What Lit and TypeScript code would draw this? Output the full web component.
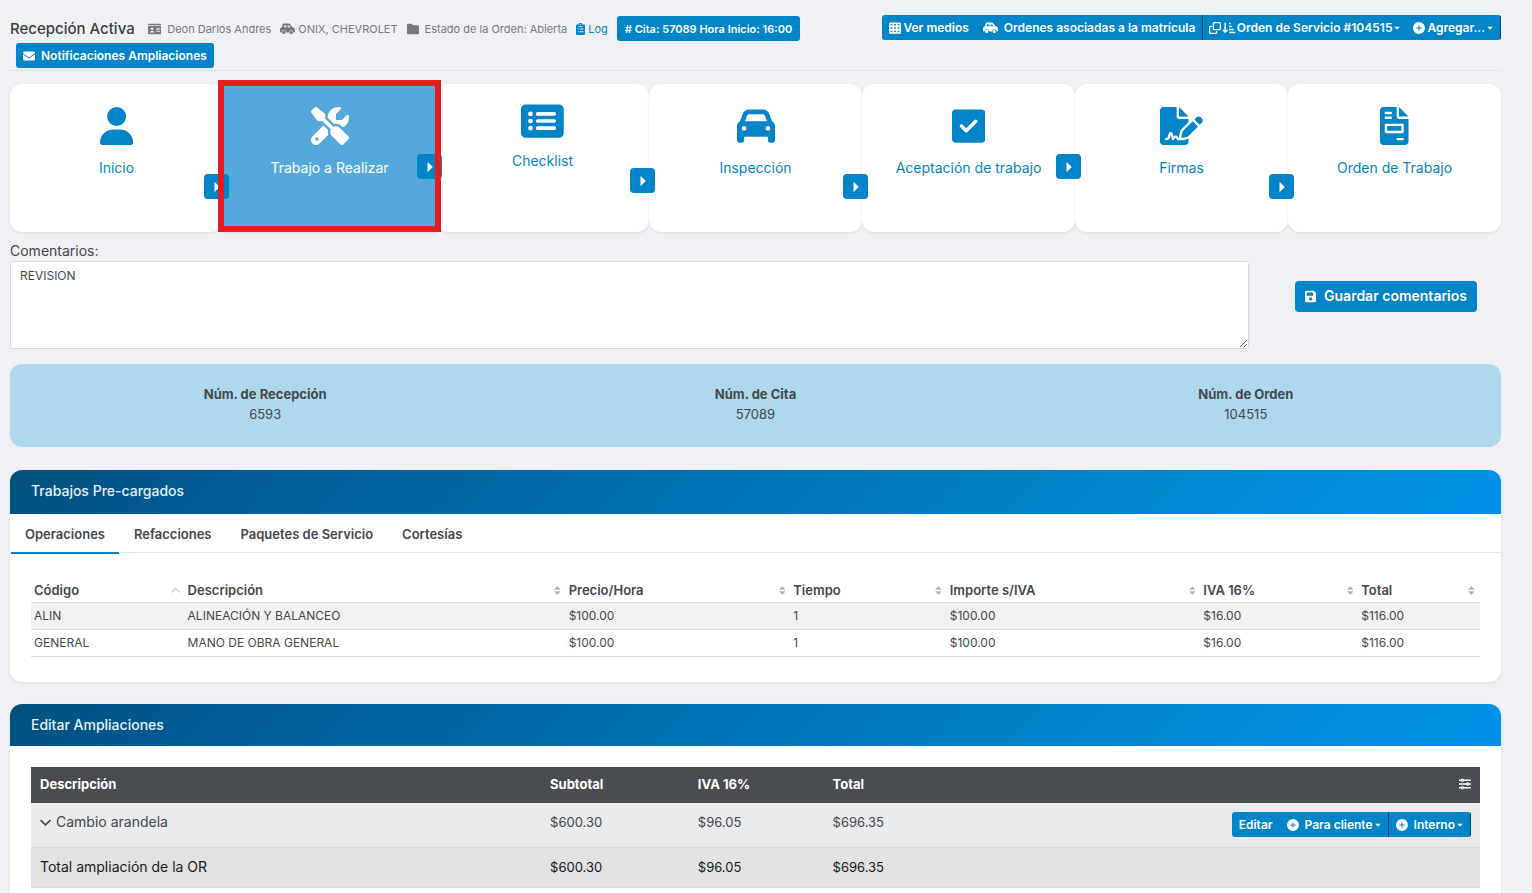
import { LitElement, html, css, svg, nothing } from "lit";
import { customElement, property, state } from "lit/decorators.js";
import { classMap } from "lit/directives/class-map.js";

/* Icon set: viewBox width (height is always 512) and shape data. */
const ICONS: Record<string, { w: number; d: string }> = {
  user: {
    w: 448,
    d: "M224 256A128 128 0 1 0 224 0a128 128 0 1 0 0 256zm-45.7 48C79.8 304 0 383.8 0 482.3C0 498.7 13.3 512 29.7 512H418.3c16.4 0 29.7-13.3 29.7-29.7C448 383.8 368.2 304 269.7 304H178.3z",
  },
  tools: {
    w: 512,
    d: "M78.6 5C69.1-2.4 55.6-1.5 47 7L7 47c-8.5 8.5-9.4 22-2.1 31.6l80 104c4.5 5.9 11.6 9.4 19 9.4h54.1l109 109c-14.7 29-10 65.4 14.3 89.6l112 112c12.5 12.5 32.8 12.5 45.3 0l64-64c12.5-12.5 12.5-32.8 0-45.3l-112-112c-24.2-24.2-60.6-29-89.6-14.3l-109-109V104c0-7.5-3.5-14.5-9.4-19L78.6 5zM19.9 396.1C7.2 408.8 0 426.1 0 444.1C0 481.6 30.4 512 67.9 512c18 0 35.3-7.2 48-19.9L233.7 374.3c-7.8-20.9-9-43.6-3.6-65.1l-61.7-61.7L19.9 396.1zM512 144c0-10.5-1.1-20.7-3.2-30.5c-2.4-11.2-16.1-14.1-24.2-6l-63.9 63.9c-3 3-7.1 4.7-11.3 4.7H352c-8.8 0-16-7.2-16-16V102.6c0-4.2 1.7-8.3 4.7-11.3l63.9-63.9c8.1-8.1 5.2-21.8-6-24.2C388.7 1.1 378.5 0 368 0C288.5 0 224 64.5 224 144l0 .8 85.3 85.3c36-9.1 75.8 .5 104 28.7L429 274.5c49-23 83-72.8 83-130.5zM56 432a24 24 0 1 1 48 0 24 24 0 1 1 -48 0z",
  },
  list: {
    w: 576,
    d: "M0 96C0 60.7 28.7 32 64 32H512c35.3 0 64 28.7 64 64V416c0 35.3-28.7 64-64 64H64c-35.3 0-64-28.7-64-64V96zM128 288a32 32 0 1 0 0-64 32 32 0 1 0 0 64zm32-128a32 32 0 1 0 -64 0 32 32 0 1 0 64 0zM128 384a32 32 0 1 0 0-64 32 32 0 1 0 0 64zm96-248c-13.3 0-24 10.7-24 24s10.7 24 24 24H448c13.3 0 24-10.7 24-24s-10.7-24-24-24H224zm0 96c-13.3 0-24 10.7-24 24s10.7 24 24 24H448c13.3 0 24-10.7 24-24s-10.7-24-24-24H224zm0 96c-13.3 0-24 10.7-24 24s10.7 24 24 24H448c13.3 0 24-10.7 24-24s-10.7-24-24-24H224z",
  },
  car: {
    w: 512,
    d: "M135.2 117.4L109.1 192H402.9l-26.1-74.6C372.3 104.6 360.2 96 346.6 96H165.4c-13.6 0-25.7 8.6-30.2 21.4zM39.6 196.8L74.8 96.3C88.3 57.8 124.6 32 165.4 32H346.6c40.8 0 77.1 25.8 90.6 64.3l35.2 100.5c23.2 9.6 39.6 32.5 39.6 59.2V400v48c0 17.7-14.3 32-32 32H448c-17.7 0-32-14.3-32-32V400H96v48c0 17.7-14.3 32-32 32H32c-17.7 0-32-14.3-32-32V400 256c0-26.7 16.4-49.6 39.6-59.2zM128 288a32 32 0 1 0 -64 0 32 32 0 1 0 64 0zm288 32a32 32 0 1 0 0-64 32 32 0 1 0 0 64z",
  },
  check: {
    w: 448,
    d: "M48 32C21.5 32 0 53.5 0 80V432c0 26.5 21.5 48 48 48H400c26.5 0 48-21.5 48-48V80c0-26.5-21.5-48-48-48H48zM337 209L209 337c-9.4 9.4-24.6 9.4-33.9 0l-64-64c-9.4-9.4-9.4-24.6 0-33.9s24.6-9.4 33.9 0l47 47L303 175c9.4-9.4 24.6-9.4 33.9 0s9.4 24.6 0 33.9z",
  },
  signature: {
    w: 576,
    d: "M48 0C21.5 0 0 21.5 0 48V464c0 26.5 21.5 48 48 48H336c26.5 0 48-21.5 48-48V428.7c-2.7 1.1-5.4 2-8.2 2.7l-60.1 15c-3 .7-6 1.2-9 1.4c-.9 .1-1.8 .2-2.7 .2H240c-6.1 0-11.6-3.4-14.3-8.8l-8.8-17.7c-1.7-3.4-5.1-5.5-8.8-5.5s-7.2 2.1-8.8 5.5l-8.8 17.7c-2.9 5.9-9.2 9.4-15.7 8.8s-12.1-5.1-13.9-11.3L144 381l-9.8 32.8c-6.1 20.3-24.8 34.2-46 34.2H80c-8.8 0-16-7.2-16-16s7.2-16 16-16h8.2c7.1 0 13.3-4.6 15.3-11.4l14.9-49.5c3.4-11.3 13.8-19.1 25.6-19.1s22.2 7.7 25.6 19.1l11.6 38.6c7.4-6.2 16.8-9.7 26.8-9.7c15.9 0 30.4 9 37.5 23.2l4.4 8.8h8.9c-3.1-8.8-3.7-18.4-1.4-27.8l15-60.1c2.8-11.3 8.6-21.5 16.8-29.7L384 203.6V160H256c-17.7 0-32-14.3-32-32V0H48zM256 0V128H384L256 0zM549.8 139.7c-15.6-15.6-40.9-15.6-56.6 0l-29.4 29.4 71 71 29.4-29.4c15.6-15.6 15.6-40.9 0-56.6l-14.4-14.4zM311.9 321c-4.1 4.1-7 9.2-8.4 14.9l-15 60.1c-1.4 5.5 .2 11.2 4.2 15.2s9.7 5.6 15.2 4.2l60.1-15c5.6-1.4 10.8-4.3 14.9-8.4L512.1 262.7l-71-71L311.9 321z",
  },
  invoice: {
    w: 384,
    d: "M256 0v128h128L256 0zM288 256H96v64h192V256zM224 128L224 0H48C21.49 0 0 21.49 0 48v416C0 490.5 21.49 512 48 512h288c26.51 0 48-21.49 48-48V160h-127.1C238.3 160 224 145.7 224 128zM64 72C64 67.63 67.63 64 72 64h80C156.4 64 160 67.63 160 72v16C160 92.38 156.4 96 152 96h-80C67.63 96 64 92.38 64 88V72zM64 136C64 131.6 67.63 128 72 128h80C156.4 128 160 131.6 160 136v16C160 156.4 156.4 160 152 160h-80C67.63 160 64 156.4 64 152V136zM320 440c0 4.375-3.625 8-8 8h-80C227.6 448 224 444.4 224 440v-16c0-4.375 3.625-8 8-8h80c4.375 0 8 3.625 8 8V440zM320 240v96c0 8.875-7.125 16-16 16h-224C71.13 352 64 344.9 64 336v-96C64 231.1 71.13 224 80 224h224C312.9 224 320 231.1 320 240z",
  },
  idCard: {
    w: 576,
    d: "M0 96V80Q0 32 48 32H528Q576 32 576 80V96ZM0 128H576V432Q576 480 528 480H48Q0 480 0 432ZM176 192a56 56 0 1 0 0 112a56 56 0 1 0 0-112ZM80 400H272Q272 336 208 336H144Q80 336 80 400ZM352 208V240H512V208ZM352 272V304H512V272ZM352 336V368H512V336Z",
  },
  carSide: {
    w: 640,
    d: "M178 104H280V176H146ZM328 104V176H462L400 114Q392 104 382 104ZM88 178Q28 186 10 236Q0 262 0 300V368Q0 400 32 400H64A96 96 0 0 1 256 400H384A96 96 0 0 1 576 400H608Q640 400 640 368V300Q640 190 534 180L446 70Q420 24 368 24H171Q120 24 106 80ZM160 328a72 72 0 1 0 0 144a72 72 0 1 0 0-144ZM480 328a72 72 0 1 0 0 144a72 72 0 1 0 0-144Z",
  },
  folder: {
    w: 512,
    d: "M48 32H176Q196 32 210 46L256 96H464Q512 96 512 144V432Q512 480 464 480H48Q0 480 0 432V80Q0 32 48 32Z",
  },
  clipboard: {
    w: 384,
    d: "M48 64H112A80 72 0 0 1 272 64H336Q384 64 384 112V464Q384 512 336 512H48Q0 512 0 464V112Q0 64 48 64ZM192 40a24 24 0 1 0 0 48a24 24 0 1 0 0-48ZM96 128V160H288V128ZM80 232V272H120V232ZM160 232V272H320V232ZM80 352V392H120V352ZM160 352V392H320V352Z",
  },
  envelope: {
    w: 512,
    d: "M48 64H464Q512 64 512 112Q512 136 492 150L275 314Q256 328 237 314L20 150Q0 136 0 112Q0 64 48 64ZM0 180L218 340Q256 366 294 340L512 180V384Q512 448 448 448H64Q0 448 0 384Z",
  },
  table: {
    w: 512,
    d: "M48 16H464Q512 16 512 64V448Q512 496 464 496H48Q0 496 0 448V64Q0 16 48 16ZM72 88V144H144V88ZM216 88V144H296V88ZM368 88V144H440V88ZM72 228V284H144V228ZM216 228V284H296V228ZM368 228V284H440V228ZM72 368V424H144V368ZM216 368V424H296V368ZM368 368V424H440V368Z",
  },
  clone: {
    w: 512,
    d: "M224 0H448Q512 0 512 64V288Q512 352 448 352H224Q160 352 160 288V64Q160 0 224 0ZM216 56V296H456V56ZM64 160H128V216H56V456H296V384H352V448Q352 512 288 512H64Q0 512 0 448V224Q0 160 64 160Z",
  },
  sort: {
    w: 576,
    d: "M104 32H168V352L216 304L262 350L136 480L10 350L56 304L104 352ZM304 32H368V92H304ZM304 160H432V220H304ZM304 288H496V348H304ZM304 416H568V476H304Z",
  },
  plus: {
    w: 512,
    d: "M256 0a256 256 0 1 0 0 512a256 256 0 1 0 0-512ZM232 144H280V232H368V280H280V368H232V280H144V232H232Z",
  },
  save: {
    w: 448,
    d: "M64 32H320Q346 32 365 51L429 115Q448 134 448 160V416Q448 480 384 480H64Q0 480 0 416V96Q0 32 64 32ZM64 112V208Q64 224 80 224H304Q320 224 320 208V112Q320 96 304 96H80Q64 96 64 112ZM224 288a64 64 0 1 0 0 128a64 64 0 1 0 0-128Z",
  },
  sliders: {
    w: 512,
    d: "M0 60H90A64 64 0 0 1 206 60H512V132H206A64 64 0 0 1 90 132H0ZM0 220H306A64 64 0 0 1 422 220H512V292H422A64 64 0 0 1 306 292H0ZM0 380H90A64 64 0 0 1 206 380H512V452H206A64 64 0 0 1 90 452H0ZM148 76a20 20 0 1 0 0 40a20 20 0 1 0 0-40ZM364 236a20 20 0 1 0 0 40a20 20 0 1 0 0-40ZM148 396a20 20 0 1 0 0 40a20 20 0 1 0 0-40Z",
  },
  play: { w: 320, d: "M64 80Q64 40 96 66L270 232Q292 256 270 280L96 446Q64 472 64 432Z" },
  caret: { w: 512, d: "M16 144H496L256 400Z" },
  chevron: { w: 512, d: "M52 120L256 314L460 120L512 174L256 420L0 174Z" },
  sortUp: { w: 512, d: "M40 384L256 168L472 384L504 350L256 104L8 350Z" },
  sortBoth: {
    w: 384,
    d: "M32 216H352Q372 206 356 184L216 32Q192 8 168 32L28 184Q12 206 32 216ZM32 296H352Q372 306 356 328L216 480Q192 504 168 480L28 328Q12 306 32 296Z",
  },
};

const icon = (name: string, cls = "ic") => {
  const i = ICONS[name];
  return html`<svg class=${cls} viewBox="0 0 ${i.w} 512" aria-hidden="true" fill="currentColor">
    ${svg`<path fill-rule="evenodd" d=${i.d}></path>`}
  </svg>`;
};

const shared = css`
  * {
    box-sizing: border-box;
  }
  button,
  textarea {
    font: inherit;
    margin: 0;
  }
  svg {
    display: block;
    flex: none;
  }
  .ic {
    height: 12px;
  }
  .caret {
    height: 6px;
  }
  .btn {
    display: inline-flex;
    align-items: center;
    gap: 6px;
    height: 25px;
    padding: 0 7px;
    border: 0;
    border-radius: 3px;
    background: #0284c8;
    color: #fff;
    font-size: 12px;
    line-height: 16px;
    font-weight: 600;
    white-space: nowrap;
    cursor: pointer;
  }
  .group {
    display: inline-flex;
    border-radius: 3px;
    overflow: hidden;
  }
  .group .btn {
    border-radius: 0;
  }
  .group .tight {
    gap: 2px;
  }
  .group .dense {
    gap: 1px;
    padding: 0 6px;
  }
  .group .split {
    border-right: 1px solid #04456b;
  }
  .menu {
    display: inline-flex;
    align-items: center;
    gap: 2px;
  }
`;

interface Step {
  label: string;
  icon: string;
  arrow?: "high" | "mid" | "low";
  active?: boolean;
  raised?: boolean;
}

const STEPS: Step[] = [
  { label: "Inicio", icon: "user", arrow: "low" },
  { label: "Trabajo a Realizar", icon: "tools", arrow: "high", active: true },
  { label: "Checklist", icon: "list", arrow: "mid", raised: true },
  { label: "Inspección", icon: "car", arrow: "low" },
  { label: "Aceptación de trabajo", icon: "check", arrow: "high" },
  { label: "Firmas", icon: "signature", arrow: "low" },
  { label: "Orden de Trabajo", icon: "invoice" },
];

@customElement("step-bar")
class StepBar extends LitElement {
  static styles = [
    shared,
    css`
      :host {
        display: block;
      }
      .steps {
        display: grid;
        grid-template-columns: repeat(7, 1fr);
        margin: 0;
        padding: 0;
        list-style: none;
      }
      .step {
        position: relative;
        min-height: 148px;
        border-radius: 12px;
        background: #fff;
        box-shadow: 0 1px 3px rgba(60, 70, 110, 0.12);
      }
      .link {
        display: flex;
        flex-direction: column;
        align-items: center;
        gap: 13px;
        height: 100%;
        padding-top: 23px;
        color: #0284c8;
        font-size: 14px;
        line-height: 20px;
        text-decoration: none;
      }
      .raised .link {
        gap: 11px;
        padding-top: 18px;
      }
      .big {
        height: 38px;
      }
      .active {
        border-radius: 4px;
        background: #55a9da;
      }
      .active .link {
        color: #fff;
      }
      .mark {
        position: absolute;
        inset: -4px -5px 0 -5px;
        z-index: 2;
        border: 6px solid #e81b1c;
        pointer-events: none;
      }
      .arrow {
        position: absolute;
        right: -6px;
        z-index: 1;
        display: grid;
        place-items: center;
        width: 25px;
        height: 25px;
        padding: 0;
        border: 0;
        border-radius: 4px;
        background: #0284c8;
        color: #fff;
      }
      .high {
        top: 70px;
      }
      .mid {
        top: 84px;
      }
      .low {
        top: 90px;
      }
    `,
  ];

  render() {
    return html`<ul class="steps">
      ${STEPS.map(
        (s) => html`<li class=${classMap({ step: true, active: !!s.active, raised: !!s.raised })}>
          <a class="link" href="#">${icon(s.icon, "big")}<span>${s.label}</span></a>
          ${s.arrow
            ? html`<button class="arrow ${s.arrow}" type="button" aria-label="Siguiente">${icon("play")}</button>`
            : nothing}
          ${s.active ? html`<span class="mark"></span>` : nothing}
        </li>`
      )}
    </ul>`;
  }
}

@customElement("panel-card")
class PanelCard extends LitElement {
  @property() heading = "";

  static styles = css`
    :host {
      display: block;
      border-radius: 12px;
      background: #fff;
      box-shadow: 0 1px 3px rgba(60, 70, 110, 0.12);
      overflow: hidden;
    }
    .head {
      margin: 0;
      padding: 11px 21px var(--head-bottom, 11px);
      background: linear-gradient(135deg, #02507b 0%, #005b96 15%, #0087cd 75%, #0093e9 100%);
      color: #e8f2fa;
      font-size: 14px;
      line-height: 20px;
      font-weight: 500;
    }
  `;

  render() {
    return html`<h2 class="head">${this.heading}</h2>
      <slot></slot>`;
  }
}

const COLS = ["Código", "Descripción", "Precio/Hora", "Tiempo", "Importe s/IVA", "IVA 16%", "Total"];
const ROWS = [
  ["ALIN", "ALINEACIÓN Y BALANCEO", "$100.00", "1", "$100.00", "$16.00", "$116.00"],
  ["GENERAL", "MANO DE OBRA GENERAL", "$100.00", "1", "$100.00", "$16.00", "$116.00"],
];
const TABS = ["Operaciones", "Refacciones", "Paquetes de Servicio", "Cortesías"];

@customElement("app-root")
class AppRoot extends LitElement {
  @state() private tab = 0;

  static styles = [
    shared,
    css`
      :host {
        display: flex;
        flex-direction: column;
        min-height: 100vh;
        box-sizing: border-box;
        padding: 15px 31px 0 10px;
        background: #f0f1f5;
        color: #44474c;
        font-family: Inter, "Liberation Sans", sans-serif;
        font-size: 13px;
        line-height: 20px;
      }
      .top {
        display: flex;
        justify-content: space-between;
        align-items: flex-start;
        padding-bottom: 2px;
        border-bottom: 1px solid #e2e3e9;
      }
      .lead {
        display: flex;
        flex-direction: column;
        align-items: flex-start;
        gap: 2px;
        padding-top: 1px;
      }
      .lead > .btn {
        margin-left: 6px;
      }
      .facts {
        display: flex;
        align-items: center;
        gap: 9px;
        color: #737981;
        font-size: 11px;
      }
      .facts .btn {
        font-size: 11px;
        padding: 0 8px;
      }
      .fact {
        display: inline-flex;
        align-items: center;
        gap: 3px;
      }
      .fact.wide {
        gap: 6px;
      }
      .title {
        margin: 0 4px 0 0;
        color: #3a3d42;
        font-size: 15px;
        line-height: 24px;
        font-weight: 500;
      }
      .log {
        color: #0284c8;
        text-decoration: none;
      }
      step-bar {
        margin-top: 13px;
      }
      .label {
        margin-top: 8px;
        font-size: 14px;
        line-height: 21px;
      }
      .comments {
        display: flex;
        align-items: center;
      }
      .box {
        display: block;
        flex: 1;
        height: 88px;
        padding: 5px 9px;
        border: 1px solid #d6d9e2;
        border-radius: 3px;
        background: #fff;
        color: #44474c;
        font-size: 12px;
        line-height: 18px;
        outline: 0;
      }
      .save {
        gap: 8px;
        height: 31px;
        margin: 0 24px 18px 46px;
        padding: 0 10px;
        border-radius: 4px;
        font-size: 14px;
      }
      .save .ic {
        height: 13px;
      }
      .info {
        display: grid;
        grid-template-columns: repeat(3, 1fr);
        margin: 15px 0 0;
        padding: 20px 10px 23px;
        border-radius: 12px;
        background: #afd8ed;
        text-align: center;
      }
      .info dt {
        font-weight: 700;
      }
      .info dd {
        margin: 0;
      }
      panel-card {
        --head-bottom: 13px;
        margin-top: 23px;
      }
      .last {
        --head-bottom: 11px;
        flex: 1;
        margin-top: 22px;
        border-radius: 12px 12px 0 0;
      }
      .tabs {
        display: flex;
        gap: 1px;
        padding: 0 1px;
        border-bottom: 1px solid #e3e4ea;
      }
      .tab {
        height: 40px;
        margin-bottom: -2px;
        padding: 2px 14px 0;
        border: 0;
        border-bottom: 2px solid transparent;
        background: none;
        color: #44474c;
        font-weight: 600;
      }
      .tab.on {
        border-bottom-color: #0284c8;
      }
      table {
        width: 100%;
        border-collapse: collapse;
        table-layout: fixed;
        text-align: left;
      }
      .pad {
        padding: 23px 21px 25px;
      }
      .jobs th {
        padding: 4px 5px 2px 3px;
        border-bottom: 1px solid #d8dadd;
        font-weight: 600;
      }
      .jobs td {
        padding: 3px;
        border-bottom: 1px solid #d8dadd;
        font-size: 12px;
      }
      .jobs tbody tr:nth-child(odd) {
        background: #f1f1f1;
      }
      .th {
        display: flex;
        align-items: center;
        justify-content: space-between;
      }
      .th .ic {
        height: 9px;
        color: #b0b3b8;
      }
      .c-code {
        width: 10.6%;
      }
      .c-desc {
        width: 26.3%;
      }
      .c-price {
        width: 15.5%;
      }
      .c-time {
        width: 10.8%;
      }
      .c-amount {
        width: 17.5%;
      }
      .c-tax {
        width: 10.9%;
      }
      .pad-ext {
        padding: 21px 21px 5px;
      }
      .ext th {
        padding: 7px 9px 9px;
        background: #494c50;
        color: #fff;
        font-weight: 700;
      }
      .ext td {
        padding: 9px 9px 10px;
        border-bottom: 1px solid #dadbdc;
        background: #e9ebed;
        vertical-align: top;
      }
      .ext td:first-child {
        font-size: 14px;
      }
      .ext .sum td {
        background: #e2e2e2;
        color: #17181a;
      }
      .name {
        display: flex;
        align-items: center;
        gap: 5px;
      }
      .name .ic {
        height: 11px;
      }
      .end > .ic {
        margin-left: auto;
      }
      .end .group {
        display: flex;
        width: max-content;
        margin-left: auto;
      }
      .e-desc {
        width: 35.2%;
      }
      .e-sub {
        width: 10.2%;
      }
      .e-tax {
        width: 9.3%;
      }
      .e-tot {
        width: 14%;
      }
    `,
  ];

  private menu(text: string) {
    return html`<span class="menu">${text}${icon("caret", "caret")}</span>`;
  }

  render() {
    return html`
      <header class="top">
        <div class="lead">
          <div class="facts">
            <h1 class="title">Recepción Activa</h1>
            <span class="fact wide">${icon("idCard")}Deon Darlos Andres</span>
            <span class="fact">${icon("carSide")}ONIX, CHEVROLET</span>
            <span class="fact wide">${icon("folder")}Estado de la Orden: Abierta</span>
            <a class="fact log" href="#">${icon("clipboard")}Log</a>
            <button class="btn" type="button"># Cita: 57089 Hora Inicio: 16:00</button>
          </div>
          <button class="btn" type="button">${icon("envelope")}Notificaciones Ampliaciones</button>
        </div>
        <div class="group">
          <button class="btn tight" type="button">${icon("table")}Ver medios</button>
          <button class="btn split" type="button">${icon("carSide")}Ordenes asociadas a la matrícula</button>
          <button class="btn dense" type="button">
            ${icon("clone")}${icon("sort")}${this.menu("Orden de Servicio #104515")}
          </button>
          <button class="btn tight split" type="button">${icon("plus")}${this.menu("Agregar...")}</button>
        </div>
      </header>

      <step-bar></step-bar>

      <label class="label" for="comments">Comentarios:</label>
      <div class="comments">
        <textarea class="box" id="comments" .value=${"REVISION"}></textarea>
        <button class="btn save" type="button">${icon("save")}Guardar comentarios</button>
      </div>

      <dl class="info">
        <div><dt>Núm. de Recepción</dt><dd>6593</dd></div>
        <div><dt>Núm. de Cita</dt><dd>57089</dd></div>
        <div><dt>Núm. de Orden</dt><dd>104515</dd></div>
      </dl>

      <panel-card heading="Trabajos Pre-cargados">
        <div class="tabs" role="tablist">
          ${TABS.map(
            (t, i) => html`<button
              class=${classMap({ tab: true, on: i === this.tab })}
              type="button"
              role="tab"
              aria-selected=${i === this.tab}
              @click=${() => (this.tab = i)}
            >${t}</button>`
          )}
        </div>
        <div class="pad">
          <table class="jobs">
            <colgroup>
              <col class="c-code" /><col class="c-desc" /><col class="c-price" /><col class="c-time" />
              <col class="c-amount" /><col class="c-tax" /><col />
            </colgroup>
            <thead>
              <tr>
                ${COLS.map(
                  (c, i) => html`<th scope="col"><div class="th">${c}${icon(i ? "sortBoth" : "sortUp")}</div></th>`
                )}
              </tr>
            </thead>
            <tbody>
              ${ROWS.map((r) => html`<tr>${r.map((c) => html`<td>${c}</td>`)}</tr>`)}
            </tbody>
          </table>
        </div>
      </panel-card>

      <panel-card class="last" heading="Editar Ampliaciones">
        <div class="pad-ext">
          <table class="ext">
            <colgroup>
              <col class="e-desc" /><col class="e-sub" /><col class="e-tax" /><col class="e-tot" /><col />
            </colgroup>
            <thead>
              <tr>
                <th scope="col">Descripción</th>
                <th scope="col">Subtotal</th>
                <th scope="col">IVA 16%</th>
                <th scope="col">Total</th>
                <th class="end" scope="col" aria-label="Opciones">${icon("sliders")}</th>
              </tr>
            </thead>
            <tbody>
              <tr>
                <td><span class="name">${icon("chevron")}Cambio arandela</span></td>
                <td>$600.30</td>
                <td>$96.05</td>
                <td>$696.35</td>
                <td class="end">
                  <div class="group">
                    <button class="btn" type="button">Editar</button>
                    <button class="btn split" type="button">${icon("plus")}${this.menu("Para cliente")}</button>
                    <button class="btn split" type="button">${icon("plus")}${this.menu("Interno")}</button>
                  </div>
                </td>
              </tr>
              <tr class="sum">
                <td>Total ampliación de la OR</td>
                <td>$600.30</td>
                <td>$96.05</td>
                <td>$696.35</td>
                <td></td>
              </tr>
            </tbody>
          </table>
        </div>
      </panel-card>
    `;
  }
}
